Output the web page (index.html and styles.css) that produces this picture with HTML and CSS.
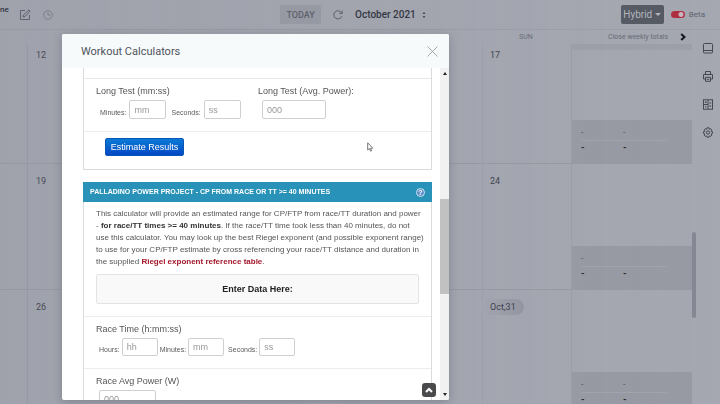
FILE: index.html
```html
<!DOCTYPE html>
<html lang="en">
<head>
	<meta charset="utf-8">
	<title>Workout Calculators</title>
	<link rel="stylesheet" href="styles.css">
</head>
<body>
	<div class="page">
		<header class="topbar">
			<span class="user">ne</span>
			<button class="icon_btn" aria-label="Edit"><svg width="12" height="12" viewBox="0 0 12 12"><path d="M6 1.5H1.5v9h9V6M4 8l.5-2L10 .8 11.2 2 6 7.5z"/></svg></button>
			<button class="icon_btn faint" aria-label="History"><svg width="10" height="10" viewBox="0 0 10 10"><circle cx="5" cy="5" r="4.3"/><path d="M5 2v3h2.5"/></svg></button>
			<div class="month_nav">
				<button class="today">TODAY</button>
				<button class="icon_btn" aria-label="Refresh"><svg width="10" height="10" viewBox="0 0 10 10"><path d="M8.8 6.2A4.1 4.1 0 1 1 8.6 3M9.2.6V3.4H6.4"/></svg></button>
				<button class="month">October 2021 <svg width="4" height="8" viewBox="0 0 4 8"><path class="solid" d="M.5 2.8 2 1l1.500 1.800zM.5 5.200 2 7l1.500-1.800z"/></svg></button>
			</div>
			<div class="view_nav">
				<button class="hybrid">Hybrid<span class="caret"></span></button>
				<label class="beta"><input type="checkbox" class="switch" checked>Beta</label>
			</div>
		</header>
		<div class="main">
			<div class="calendar">
				<div class="cal_head">
					<span class="day_name">SUN</span>
					<button class="close_totals">Close weekly totals <svg width="6" height="8" viewBox="0 0 6 8"><path d="M1.200 1 4.500 4 1.200 7"/></svg></button>
				</div>
				<div class="week first">
					<div></div><div class="day">12</div><div class="day"><span>17</span></div>
					<div class="totals"><div class="sums"><span>-</span><span>-</span><hr><b>-</b><b>-</b></div></div>
				</div>
				<div class="week">
					<div></div><div class="day">19</div><div class="day"><span>24</span></div>
					<div class="totals"><div class="sums"><span>-</span><span></span><hr><b>-</b><b>-</b></div></div>
				</div>
				<div class="week">
					<div></div><div class="day">26</div><div class="day"><span class="pill">Oct,31</span></div>
					<div class="totals"><div class="sums"><span>-</span><span>-</span><hr><b>-</b><b>-</b></div></div>
				</div>
			</div>
			<div class="page_scroll"><div class="page_thumb"></div></div>
			<nav class="rail">
				<button class="icon_btn" aria-label="Panel"><svg width="10" height="11" viewBox="0 0 10 11"><rect x=".5" y=".5" width="9" height="9.500" rx="1"/><path d="M.5 7.500h9"/></svg></button>
				<button class="icon_btn" aria-label="Print"><svg width="10" height="11" viewBox="0 0 10 11"><path d="M2.500 3.500v-3h5v3M2.300 8H.5V3.500h9V8H7.700M2.500 6.300h5v4h-5zM3.800 8.300h2.400"/></svg></button>
				<button class="icon_btn" aria-label="Calculators"><svg width="10" height="11" viewBox="0 0 10 11"><rect x=".5" y=".8" width="9" height="9.400"/><path d="M5 1v9M.5 5.500H5M2 3.200h1.500M2.700 2.400v1.600M2 7.800h1.500M6.300 4h2M6.300 7h2"/></svg></button>
				<button class="icon_btn" aria-label="Settings"><svg width="10" height="11" viewBox="0 0 10 11"><path d="M4 .8h2l.3 1.400 1.300-.5 1.300 1.500-.8 1.100 1.400.5v1.600l-1.300.5.7 1.200-1.300 1.300-1.200-.6L6 10.200H4l-.4-1.400-1.200.6L1.100 8.100l.7-1.200L.5 6.400V4.800l1.400-.5-.8-1.100 1.300-1.500 1.300.5z"/><circle cx="5" cy="5.500" r="1.600"/></svg></button>
			</nav>
		</div>
	</div>

	<div class="overlay"></div>

	<div class="modal" role="dialog" aria-labelledby="modal_title">
		<div class="modal_head">
			<h1 id="modal_title">Workout Calculators</h1>
			<button class="close" aria-label="Close"><svg width="11" height="11" viewBox="0 0 11 11"><path d="M.5.5l10 10M10.500.5l-10 10"/></svg></button>
		</div>
		<div class="modal_body">
			<div class="content">
				<form class="panel">
					<div class="tests">
						<div class="test">
							<h2>Long Test (mm:ss)</h2>
							<div class="fields">
								<label for="lt_min">Minutes:</label><input type="text" id="lt_min" placeholder="mm">
								<label for="lt_sec" class="spaced">Seconds:</label><input type="text" id="lt_sec" placeholder="ss">
							</div>
						</div>
						<div class="test">
							<h2><label for="lt_power">Long Test (Avg. Power):</label></h2>
							<div class="fields"><input type="text" id="lt_power" class="wide" placeholder="000"></div>
						</div>
					</div>
					<div class="actions"><button type="button" class="estimate">Estimate Results</button></div>
				</form>

				<form class="panel race">
					<div class="panel_head">
						<h2>PALLADINO POWER PROJECT - CP FROM RACE OR TT &gt;= 40 MINUTES</h2>
						<button type="button" class="help" aria-label="Help">?</button>
					</div>
					<div class="intro">
						<p>This calculator will provide an estimated range for CP/FTP from race/TT duration and power<br>
						- <b>for race/TT times &gt;= 40 minutes</b>. If the race/TT time took less than 40 minutes, do not<br>
						use this calculator. You may look up the best Riegel exponent (and possible exponent range)<br>
						to use for your CP/FTP estimate by cross referencing your race/TT distance and duration in<br>
						the supplied <a href="#">Riegel exponent reference table</a>.</p>
						<h3 class="enter">Enter Data Here:</h3>
					</div>
					<div class="race_time">
						<h2>Race Time (h:mm:ss)</h2>
						<div class="fields">
							<label for="rt_h">Hours:</label><input type="text" id="rt_h" placeholder="hh">
							<label for="rt_m">Minutes:</label><input type="text" id="rt_m" placeholder="mm">
							<label for="rt_s" class="spaced">Seconds:</label><input type="text" id="rt_s" placeholder="ss">
						</div>
					</div>
					<div class="race_time">
						<h2><label for="rt_power">Race Avg Power (W)</label></h2>
						<div class="fields"><input type="text" id="rt_power" class="wide" placeholder="000"></div>
					</div>
				</form>
			</div>
			<div class="scroll">
				<i class="arrow up"></i>
				<div class="track"><div class="thumb"></div></div>
				<i class="arrow down"></i>
			</div>
		</div>
		<button class="to_top" aria-label="Back to top"><svg width="8" height="6" viewBox="0 0 8 6"><path d="M1 5l3-3 3 3"/></svg></button>
	</div>

	<svg class="cursor" width="7" height="10" viewBox="0 0 7 10"><path d="M.7.8v7.200l1.700-1.500 1.200 2.700 1-.5-1.100-2.500h2.300z"/></svg>
</body>
</html>
```

FILE: styles.css
```css
* { box-sizing: border-box; }

body { margin: 0; font-family: Roboto, sans-serif; font-size: 9px; color: #3e414c; overflow: hidden; }

button { border: 0; padding: 0; background: none; font: inherit; color: inherit; }

h1, h2, h3, p { margin: 0; font-weight: normal; }

svg { display: block; fill: none; stroke: currentColor; stroke-width: 1; }

/* calendar page */

.page { display: flex; flex-direction: column; height: 100vh; background: #a5a8b1; }

.topbar { display: flex; align-items: center; height: 30px; border-bottom: 1px solid #9c9fa8; flex: none; gap: 12px; }

.user { width: 7px; height: 20px; font-size: 8px; font-weight: 500; color: #252833; }

.icon_btn { color: #5a5d68; }

.faint { color: #7d808b; }

.month_nav { display: flex; align-items: center; gap: 12px; margin-left: auto; }

.today { width: 41px; height: 19px; background: #999ca5; font-weight: 500; color: #5b5e68; border-radius: 2px; }

.month { display: flex; align-items: center; gap: 6px; font-size: 10px; font-weight: 500; color: #2f323d; }

.solid { fill: currentColor; stroke: none; }

.view_nav { display: flex; align-items: center; gap: 7px; margin-left: 183px; padding-right: 15px; }

.hybrid { display: flex; align-items: center; justify-content: center; gap: 3px; width: 43px; height: 19px; background: #555a63; color: #b4b7bf; font-size: 10px; border-radius: 2px; }

.caret { border: 3px solid transparent; border-top-color: #b4b7bf; border-bottom: 0; }

.beta { display: flex; align-items: center; gap: 4px; font-size: 8px; color: #5f626c; }

.switch { appearance: none; width: 14px; height: 7px; margin: 0; border-radius: 4px; background: radial-gradient(circle at 10px 50%, #c9b5bd 2px, #af2e40 3px); }

.main { display: flex; flex: 1; min-height: 0; }

.calendar { flex: 1; overflow: hidden; }

.cal_head, .week { display: grid; grid-template-columns: 27px 1fr 89px 121px; }

.cal_head { height: 14px; align-items: center; font-size: 7px; color: #686b76; }

.day_name { grid-column: 3; padding-left: 37px; }

.close_totals { display: flex; align-items: center; justify-content: flex-end; gap: 12px; padding-right: 6px; }

.close_totals svg { color: #14161c; stroke-width: 2; }

.week { height: 126px; border-bottom: 1px solid #989ba4; }

.week.first { height: 120px; }

.week.first .day { padding-top: 5px; }

.day { padding: 11px 8px; border-left: 1px solid #9a9da6; line-height: 12px; }

.day:nth-child(3) { padding-left: 7px; border-color: #9fa2ab; }

.pill { display: inline-block; margin: -2px -8px; padding: 2px 8px; border-radius: 8px; background: linear-gradient(90deg, #a5a8b1, #9497a2); }

.totals { display: flex; flex-direction: column; justify-content: flex-end; border-left: 1px solid #9b9ea7; }

.first .totals { border-top: 6px solid #9da0a8; }

.sums { display: grid; grid-template-columns: 42px 1fr; align-content: space-between; height: 43px; padding: 9px 26px 12px 9px; background: #989ba4; line-height: 7px; color: #5a5d67; }

.sums b { color: #22252e; }

.sums hr { grid-column: 1 / 3; width: 100%; margin: 0; border: 0; border-top: 1px solid #a2a5ad; }

.page_scroll { width: 4px; padding-top: 202px; }

.page_thumb { height: 86px; background: #858893; border-radius: 2px; }

.rail { display: flex; flex-direction: column; align-items: center; gap: 17px; width: 24px; padding-top: 13px; }

.rail .icon_btn { color: #454852; }

/* shade on top of the calendar */

.overlay { position: fixed; inset: 0; background: linear-gradient(90deg, #80839026, #80839010 60%, transparent); }

/* calculators dialog */

.modal { position: fixed; top: 34px; right: 271px; bottom: 4px; left: 62px; display: flex; flex-direction: column; overflow: hidden; background: #fff; border-radius: 2px; box-shadow: 0 2px 10px #50536066; }

.modal_head { display: flex; align-items: center; justify-content: space-between; flex: none; height: 34px; padding: 0 11px 0 19px; background: #f6fafb; }

.modal_head h1 { font-size: 11px; color: #50535c; }

.close { color: #90939a; }

.close svg { stroke-width: .8; }

.modal_body { display: flex; flex: 1; min-height: 0; overflow: hidden; }

.content { flex: 1; min-width: 0; padding: 0 8px 0 21px; font-family: "Liberation Sans", Arial, sans-serif; color: #555; }

.panel { padding-top: 10px; border: 1px solid #d9dcde; border-top: 0; }

.tests { display: grid; grid-template-columns: 162px 1fr; padding: 6px 12px 12px; border-top: 1px solid #e6e8ea; border-bottom: 1px solid #ececee; height: 54px; }

.panel h2 { font-size: 9px; line-height: 12px; }

.fields { display: flex; align-items: flex-end; gap: 3px; padding-left: 4px; margin-top: 3px; }

.fields label { font-size: 7px; line-height: 12px; color: #5a5a5a; }

.fields .spaced { padding-left: 2px; }

.fields input { width: 37px; height: 19px; padding: 0 4px; border: 1px solid #cdcfd2; border-radius: 2px; font: 9px "Liberation Sans", Arial, sans-serif; color: #444; }

.fields .wide { width: 64px; }

.fields input::placeholder { color: #999; }

.actions { padding: 6px 21px 13px; }

.estimate { display: block; width: 79px; height: 18px; border: 1px solid #0a55b8; border-radius: 2px; background: linear-gradient(#0a7ad6, #0448c4); color: #fff; font-size: 9px; }

.race { margin-top: 12px; padding-top: 0; }

.race .fields { gap: 2px; padding-left: 3px; }

.race .fields input { width: 36px; height: 18px; }

.race .fields .wide { width: 57px; }

.panel_head { display: flex; align-items: center; justify-content: space-between; height: 20px; margin: 0 -1px; padding: 0 7px; background: #2992b9; }

.panel .panel_head h2 { font-size: 7px; font-weight: bold; color: #fff; }

.help { width: 9px; height: 9px; border: 1px solid #c9e3ee; border-radius: 50%; background: #5d8fca; color: #fff; font-size: 7px; font-weight: bold; line-height: 7px; }

.intro { padding: 6px 12px 12px; }

.intro p { font-size: 8px; line-height: 12px; white-space: nowrap; }

.intro b { color: #333; }

.intro a { color: #a3172a; font-weight: bold; text-decoration: none; }

.enter { margin-top: 6px; border: 1px solid #e3e4e6; border-radius: 2px; background: #f9f9fa; font-size: 9px; font-weight: bold; line-height: 28px; text-align: center; color: #222; }

.race_time { padding: 6px 12px 12px; border-top: 1px solid #ececee; }

.scroll { display: flex; flex-direction: column; align-items: center; flex: none; width: 9px; padding: 4px 0; background: #f1f1f2; }

.track { flex: 1; width: 100%; padding-top: 124px; }

.thumb { height: 95px; background: #c1c1c2; }

.arrow { border: 2px solid transparent; }

.up { border-top: 0; border-bottom: 3px solid #222; }

.down { border-bottom: 0; border-top: 3px solid #222; }

.to_top { position: absolute; right: 13px; bottom: 3px; display: grid; place-items: center; width: 14px; height: 14px; border-radius: 3px; background: #4a4a4c; color: #fff; }

.to_top svg { stroke-width: 2; }

.cursor { position: fixed; top: 142px; left: 367px; fill: #fff; stroke: #777; }
```
